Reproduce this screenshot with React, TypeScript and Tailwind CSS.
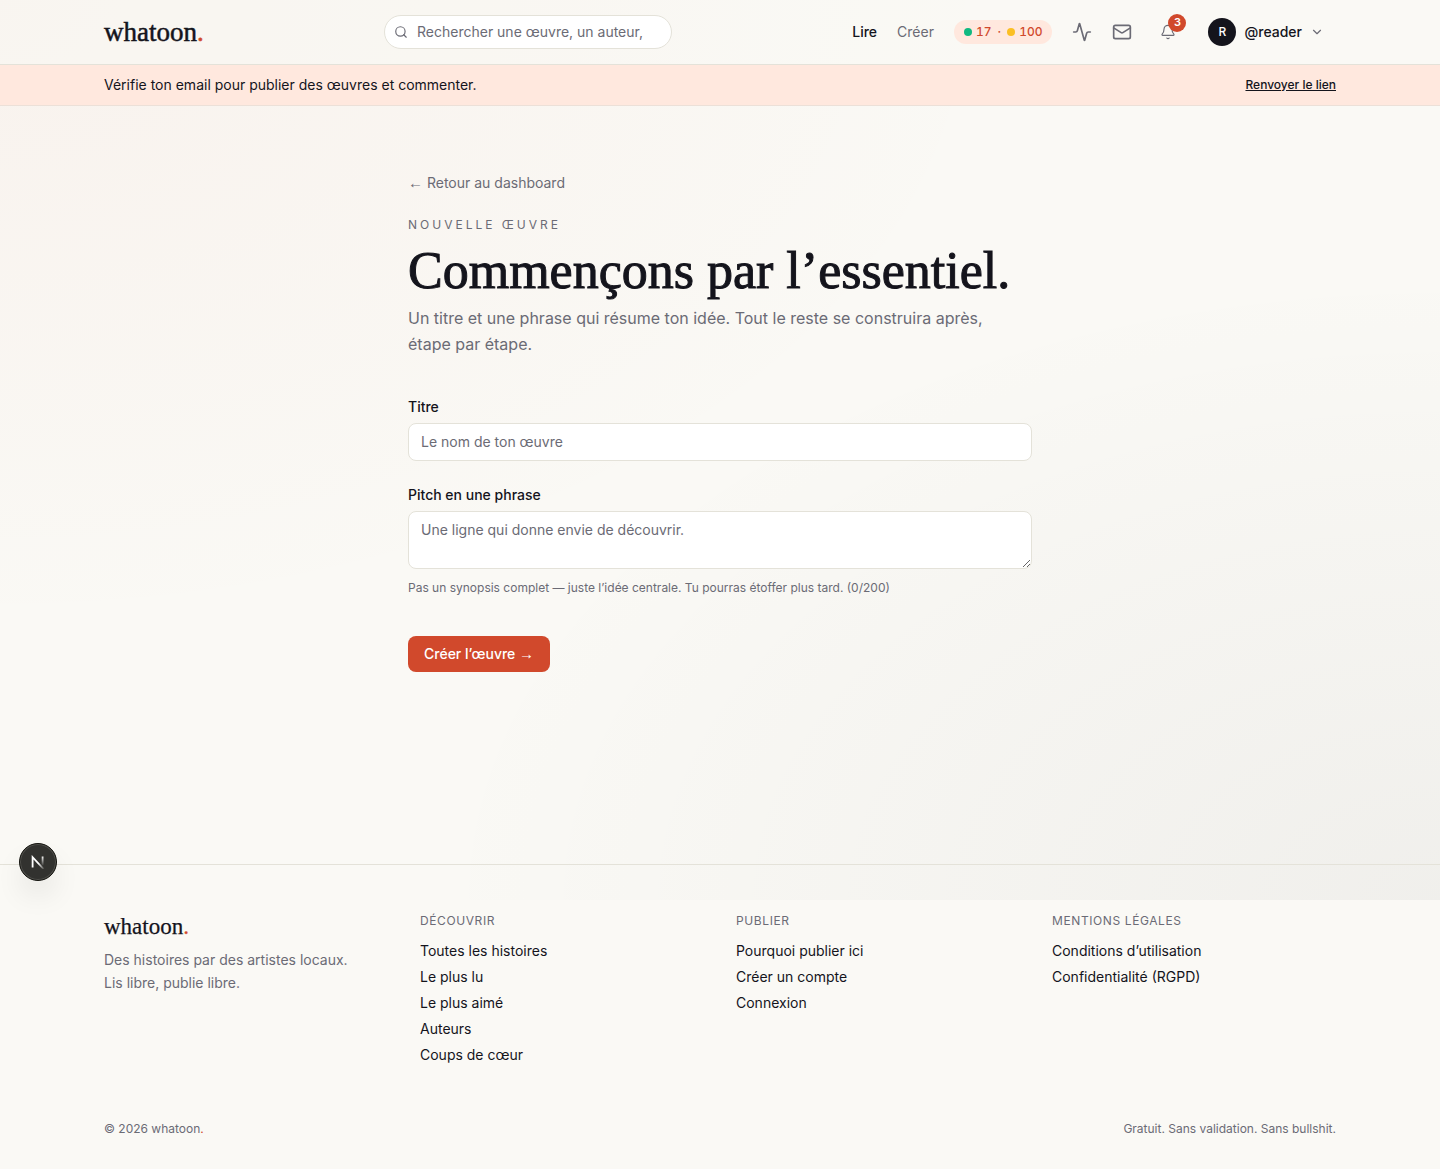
import { Activity, Bell, ChevronDown, Mail, Search } from "lucide-react";

const columns = [
  {
    title: "Découvrir",
    links: ["Toutes les histoires", "Le plus lu", "Le plus aimé", "Auteurs", "Coups de cœur"],
  },
  { title: "Publier", links: ["Pourquoi publier ici", "Créer un compte", "Connexion"] },
  { title: "Mentions légales", links: ["Conditions d’utilisation", "Confidentialité (RGPD)"] },
];

function Header() {
  return (
    <header className="border-b border-[#e4e2d9] bg-[#faf9f5]/40">
      <div className="mx-auto flex h-16 max-w-7xl items-center justify-between px-6">
        <a
          href="#"
          className="font-['Liberation_Serif',serif] text-[27px] leading-8 [-webkit-text-stroke:0.5px_currentColor]"
        >
          whatoon<span className="text-[#d1492c]">.</span>
        </a>
        <form className="relative w-72" role="search">
          <Search className="absolute top-2.5 left-2.5 size-3.5 text-[#6b6b75]" strokeWidth={2} />
          <input
            type="search"
            aria-label="Rechercher"
            placeholder="Rechercher une œuvre, un auteur,"
            className="block w-full rounded-full border border-[#e4e2d9] bg-white py-1.5 pr-3 pl-8 text-sm placeholder:text-[#6b6b75]"
          />
        </form>
        <nav className="flex items-center gap-5 text-sm">
          <a href="#" className="font-medium">Lire</a>
          <a href="#" className="text-[#6b6b75]">Créer</a>
          <a
            href="#"
            className="flex h-6 items-center gap-1 rounded-full bg-[#ffe8de] px-2.5 text-xs font-medium text-[#d1492c] tabular-nums"
          >
            <span className="size-2 rounded-full bg-[#10b981]" />
            <span>17</span>
            <span className="px-0.5">·</span>
            <span className="size-2 rounded-full bg-[#fbbf24]" />
            <span>100</span>
          </a>
          <a href="#" aria-label="Activité" className="text-[#6b6b75]">
            <Activity className="size-5" strokeWidth={2} />
          </a>
          <a href="#" aria-label="Messages" className="text-[#6b6b75]">
            <Mail className="size-5" strokeWidth={2} />
          </a>
          <button
            type="button"
            aria-label="Notifications"
            className="relative flex size-8 items-center justify-center text-[#6b6b75]"
          >
            <Bell className="size-4" strokeWidth={1.75} />
            <span className="absolute -top-0.5 -right-0.5 flex size-[18px] items-center justify-center rounded-full bg-[#d1492c] text-[11px] font-semibold text-white">
              3
            </span>
          </button>
          <button type="button" className="flex items-center gap-2 pr-3 pl-1 font-medium">
            <span className="flex size-7 items-center justify-center rounded-full bg-[#14141c] text-xs text-white">
              R
            </span>
            @reader
            <ChevronDown className="size-3.5 text-[#6b6b75]" strokeWidth={2} />
          </button>
        </nav>
      </div>
    </header>
  );
}

function Footer() {
  return (
    <footer className="mt-32 border-t border-[#e4e2d9]">
      <div className="mx-auto max-w-7xl px-6 pt-12 pb-8">
        <div className="grid grid-cols-4 gap-8">
          <div>
            <p className="font-['Liberation_Serif',serif] text-[23px] leading-7 [-webkit-text-stroke:0.25px_currentColor]">
              whatoon<span className="text-[#d1492c]">.</span>
            </p>
            <p className="mt-[7px] text-sm leading-[23px] text-[#6b6b75]">
              Des histoires par des artistes locaux.
              <br />
              Lis libre, publie libre.
            </p>
          </div>
          {columns.map((column) => (
            <div key={column.title}>
              <h2 className="text-xs tracking-wider text-[#6b6b75] uppercase">{column.title}</h2>
              <ul className="mt-3 flex flex-col gap-1.5 text-sm">
                {column.links.map((link) => (
                  <li key={link}>
                    <a href="#">{link}</a>
                  </li>
                ))}
              </ul>
            </div>
          ))}
        </div>
        <div className="mt-14 flex justify-between text-xs text-[#6b6b75]">
          <p>
            © 2026 whatoon<span className="text-[#d1492c]">.</span>
          </p>
          <p>Gratuit. Sans validation. Sans bullshit.</p>
        </div>
      </div>
    </footer>
  );
}

function DevBadge() {
  return (
    <button
      type="button"
      aria-label="Next.js"
      className="absolute top-[843px] left-[19px] flex size-[38px] items-center justify-center rounded-full border border-[#14140f] bg-[#32322f] shadow-[inset_0_0_0_1px_#50504c,0_16px_32px_-8px_rgba(0,0,0,0.2)]"
    >
      <svg width="14" height="14" viewBox="0 0 14 14" fill="none" strokeWidth="1.8">
        <defs>
          <linearGradient id="stem" x1="0" y1="1" x2="0" y2="11" gradientUnits="userSpaceOnUse">
            <stop stopColor="white" />
            <stop offset="1" stopColor="white" stopOpacity="0" />
          </linearGradient>
          <linearGradient id="diagonal" x1="8" y1="8" x2="13" y2="14" gradientUnits="userSpaceOnUse">
            <stop stopColor="white" />
            <stop offset="1" stopColor="white" stopOpacity="0.1" />
          </linearGradient>
        </defs>
        <path d="M1.6 12.5V2.2L12.6 14" stroke="url(#diagonal)" />
        <path d="M11.6 1.5V10.5" stroke="url(#stem)" />
      </svg>
    </button>
  );
}

export default function App() {
  return (
    <div className="relative isolate min-h-screen bg-[#faf9f5] font-['Inter',sans-serif] text-[#14141c]">
      <div className="pointer-events-none absolute inset-x-0 top-0 -z-10 h-[900px] bg-[radial-gradient(ellipse_at_top_left,rgba(209,73,44,0.04),transparent_50%),radial-gradient(ellipse_at_bottom_right,rgba(20,20,28,0.045),transparent_50%)]" />
      <Header />
      <div className="border-b border-[#ece0d8] bg-[#ffe8de]">
        <div className="mx-auto flex max-w-7xl items-center justify-between px-6 py-2.5 text-sm">
          <p>Vérifie ton email pour publier des œuvres et commenter.</p>
          <button type="button" className="text-xs font-medium underline">
            Renvoyer le lien
          </button>
        </div>
      </div>
      <main className="mx-auto max-w-2xl px-6 py-16">
        <a href="#" className="block text-sm leading-[26px] text-[#6b6b75]">
          <span className="font-['Liberation_Sans',sans-serif] text-[15px]">←</span> Retour au dashboard
        </a>
        <p className="mt-5 text-xs leading-[18px] tracking-[0.25em] text-[#6b6b75] uppercase">
          Nouvelle œuvre
        </p>
        <h1 className="mt-2.5 font-['Liberation_Serif',serif] text-[52px] leading-[53px] whitespace-nowrap [-webkit-text-stroke:1px_currentColor]">
          Commençons par l’essentiel.
        </h1>
        <p className="mt-2 max-w-[600px] leading-[26px] text-[#6b6b75]">
          Un titre et une phrase qui résume ton idée. Tout le reste se construira après, étape par étape.
        </p>
        <form className="mt-10">
          <label htmlFor="title" className="block text-sm font-medium">
            Titre
          </label>
          <input
            id="title"
            type="text"
            placeholder="Le nom de ton œuvre"
            className="mt-1.5 block w-full rounded-lg border border-[#e4e2d9] bg-white px-3 py-2 text-sm placeholder:text-[#6b6b75]"
          />
          <label htmlFor="pitch" className="mt-6 block text-sm font-medium">
            Pitch en une phrase
          </label>
          <textarea
            id="pitch"
            rows={2}
            placeholder="Une ligne qui donne envie de découvrir."
            className="mt-1.5 block w-full rounded-lg border border-[#e4e2d9] bg-white px-3 py-2 text-sm placeholder:text-[#6b6b75]"
          />
          <p className="mt-[11px] text-xs text-[#6b6b75]">
            Pas un synopsis complet — juste l’idée centrale. Tu pourras étoffer plus tard. (0/200)
          </p>
          <button
            type="submit"
            className="mt-10 h-9 rounded-lg bg-[#d1492c] px-4 text-sm font-medium text-white"
          >
            Créer l’œuvre{" "}
            <span className="font-['Liberation_Sans',sans-serif] text-[15px] font-normal">→</span>
          </button>
        </form>
      </main>
      <Footer />
      <DevBadge />
    </div>
  );
}
